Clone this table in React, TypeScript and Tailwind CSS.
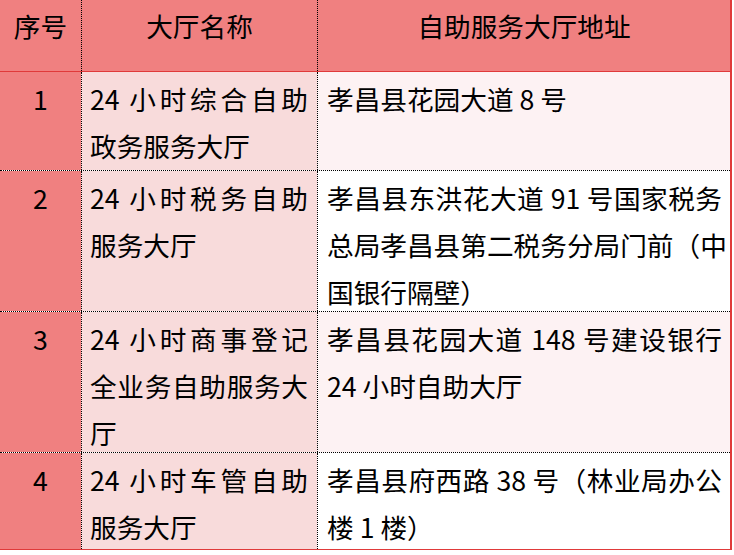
const rows = [
  {
    no: "1",
    name: ["24 小时综合自助", "政务服务大厅"],
    addr: ["孝昌县花园大道 8 号"],
    h: "h-[98px]",
    addrBg: "bg-[#fdf2f3]",
  },
  {
    no: "2",
    name: ["24 小时税务自助", "服务大厅"],
    addr: ["孝昌县东洪花大道 91 号国家税务", "总局孝昌县第二税务分局门前（中", "国银行隔壁）"],
    h: "h-[140px]",
    addrBg: "bg-white",
  },
  {
    no: "3",
    name: ["24 小时商事登记", "全业务自助服务大", "厅"],
    addr: ["孝昌县花园大道 148 号建设银行", "24 小时自助大厅"],
    h: "h-[140px]",
    addrBg: "bg-[#fdf2f3]",
  },
  {
    no: "4",
    name: ["24 小时车管自助", "服务大厅"],
    addr: ["孝昌县府西路 38 号（林业局办公", "楼 1 楼）"],
    h: "h-[96px]",
    addrBg: "bg-white",
  },
];

// word-style justified paragraph: every line but the last is spread to the edge
function Lines({ lines }: { lines: string[] }) {
  return (
    <>
      {lines.map((l, i) => (
        <div
          key={l}
          className={`whitespace-nowrap ${i < lines.length - 1 ? "text-justify [text-align-last:justify]" : ""}`}
        >
          {l}
        </div>
      ))}
    </>
  );
}

export default function App() {
  return (
    <div
      className="w-[734px] h-[555px] bg-white text-black text-[26.67px] leading-[47px]"
      style={{ fontFamily: '"Noto Sans CJK SC", "Noto Sans", sans-serif' }}
    >
      <div className="w-[732px] border-r-2 border-[#e03a3a]">
        {/* Header */}
        <div className="flex h-[72px] bg-[#f08080] border-b border-[#e03a3a]">
          <div className="w-[81px] shrink-0 pt-[2px] text-center whitespace-nowrap">序号</div>
          <div className="w-[236px] shrink-0 pt-[2px] text-center border-l border-dotted border-black whitespace-nowrap">
            大厅名称
          </div>
          <div className="flex-1 pt-[2px] text-center border-l border-dotted border-black whitespace-nowrap">
            自助服务大厅地址
          </div>
        </div>

        {/* Body */}
        {rows.map((r, i) => (
          <div
            key={r.no}
            className={`flex box-content ${r.h} border-b ${
              i === rows.length - 1 ? "border-solid border-[#e03a3a]" : "border-dotted border-black"
            }`}
          >
            <div className="w-[81px] shrink-0 bg-[#f08080] pt-[3px] text-center">{r.no}</div>
            <div className="w-[236px] shrink-0 bg-[#f8dbdb] pt-[3px] pl-[8px] pr-[9px] border-l border-dotted border-black">
              <Lines lines={r.name} />
            </div>
            <div className={`flex-1 min-w-0 ${r.addrBg} pt-[3px] pl-[9px] pr-[8px] border-l border-dotted border-black`}>
              <Lines lines={r.addr} />
            </div>
          </div>
        ))}
      </div>
    </div>
  );
}
